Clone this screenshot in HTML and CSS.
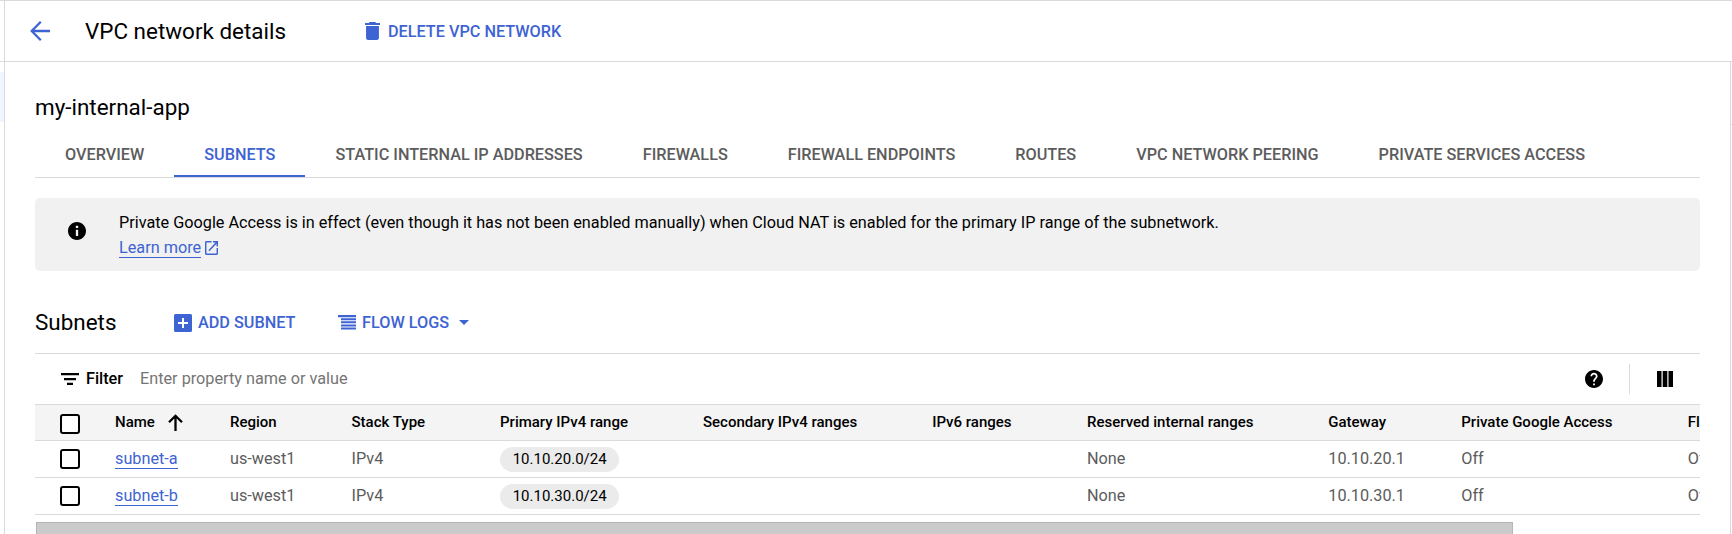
FILE: index.html
```html
<!DOCTYPE html>
<html lang="en">
<head>
<meta charset="utf-8">
<title>VPC network details</title>
<link rel="stylesheet" href="styles.css">
</head>
<body>
<div class="app">
  <div class="rail"><span class="rail-active"></span></div>
  <div class="panel">
    <header class="topbar">
      <svg class="back" viewBox="0 0 20 22" width="20" height="22"><path d="M20 11H2M10.800 1.800L1.700 11L10.800 20.200" fill="none" stroke="currentColor" stroke-width="2.300"/></svg>
      <h1 class="title">VPC network details</h1>
      <button class="action delete">
        <svg viewBox="5 3 14 18" width="15" height="18" preserveAspectRatio="none"><path fill="currentColor" d="M6 19c0 1.100.9 2 2 2h8c1.100 0 2-.9 2-2V7H6v12zM19 4h-3.500l-1-1h-5l-1 1H5v2h14V4z"/></svg>
        <span>DELETE VPC NETWORK</span>
      </button>
    </header>
    <div class="body">
      <main class="content">
        <h2 class="name">my-internal-app</h2>
        <nav class="tabs">
          <a class="tab">OVERVIEW</a>
          <a class="tab active">SUBNETS</a>
          <a class="tab">STATIC INTERNAL IP ADDRESSES</a>
          <a class="tab">FIREWALLS</a>
          <a class="tab">FIREWALL ENDPOINTS</a>
          <a class="tab">ROUTES</a>
          <a class="tab">VPC NETWORK PEERING</a>
          <a class="tab">PRIVATE SERVICES ACCESS</a>
        </nav>
        <section class="notice">
          <svg class="info" viewBox="2 2 20 20" width="18" height="18"><path fill="currentColor" d="M12 2C6.480 2 2 6.480 2 12s4.480 10 10 10 10-4.480 10-10S17.520 2 12 2zm1.300 15.500h-2.600V10.700h2.600v6.800zm0-8.700h-2.600V6.300h2.600v2.500z"/></svg>
          <div class="notice-text">
            <p>Private Google Access is in effect (even though it has not been enabled manually) when Cloud NAT is enabled for the primary IP range of the subnetwork.</p>
            <p class="learn"><a class="link">Learn more</a><svg viewBox="3 3 18 18" width="13" height="14" preserveAspectRatio="none"><path fill="currentColor" d="M19 19H5V5h7V3H5c-1.110 0-2 .9-2 2v14c0 1.100.89 2 2 2h14c1.100 0 2-.9 2-2v-7h-2v7zM14 3v2h3.590l-9.830 9.830 1.410 1.410L19 6.410V10h2V3h-7z"/></svg></p>
          </div>
        </section>
        <div class="subnets-bar">
          <h2 class="subnets-title">Subnets</h2>
          <button class="action add">
            <svg viewBox="0 0 18 18" width="18" height="18"><path fill="currentColor" fill-rule="evenodd" d="M1.500 0h15A1.500 1.500 0 0 1 18 1.500v15a1.500 1.500 0 0 1-1.500 1.500h-15A1.500 1.500 0 0 1 0 16.500v-15A1.500 1.500 0 0 1 1.500 0zM8 4v4H4v2h4v4h2v-4h4V8h-4V4z"/></svg>
            <span>ADD SUBNET</span>
          </button>
          <button class="action flow">
            <svg viewBox="0 0 18 15" width="18" height="15"><path fill="currentColor" d="M0 0h18v2.200H0zM3 3.200h15v2H3zM3 6.300h15v2H3zM3 9.400h15v2H3zM3 12.500h15v2H3z"/></svg>
            <span>FLOW LOGS</span>
            <svg class="caret" viewBox="0 0 10 5" width="10" height="5"><path fill="currentColor" d="M0 0h10L5 5z"/></svg>
          </button>
        </div>
        <div class="filter-bar">
          <svg class="filter-icon" viewBox="0 0 18 12" width="18" height="12"><path fill="currentColor" d="M0 0h18v2.300H0zM3 5h12v2.200H3zM6 9.800h6V12H6z"/></svg>
          <span class="filter-label">Filter</span>
          <span class="placeholder">Enter property name or value</span>
          <svg class="help" viewBox="2 2 20 20" width="18" height="18"><path fill="currentColor" d="M12 2C6.480 2 2 6.480 2 12s4.480 10 10 10 10-4.480 10-10S17.520 2 12 2zm1 17h-2v-2h2v2zm2.070-7.750l-.9.920C13.450 12.900 13 13.500 13 15h-2v-.5c0-1.100.45-2.100 1.170-2.830l1.240-1.260c.370-.360.590-.860.590-1.410 0-1.100-.9-2-2-2s-2 .9-2 2H8c0-2.210 1.790-4 4-4s4 1.790 4 4c0 .880-.360 1.680-.930 2.250z"/></svg>
          <span class="divider"></span>
          <svg class="columns" viewBox="0 0 16 16" width="16" height="16"><path fill="currentColor" d="M0 0h4.500v16H0zM5.700 0h4.600v16H5.700zM11.500 0H16v16h-4.500z"/></svg>
        </div>
        <div class="table">
          <div class="row head">
            <span class="check"></span>
            <span class="sorted">Name <svg viewBox="0 0 15 17" width="15" height="17"><path d="M7.500 17V1.800M1 8.300L7.500 1.800L14 8.300" fill="none" stroke="currentColor" stroke-width="2.300"/></svg></span>
            <span>Region</span><span>Stack Type</span><span>Primary IPv4 range</span><span>Secondary IPv4 ranges</span><span>IPv6 ranges</span><span>Reserved internal ranges</span><span>Gateway</span><span>Private Google Access</span><span>Flow logs</span>
          </div>
          <div class="row">
            <span class="check"></span>
            <span><a class="link">subnet-a</a></span><span>us-west1</span><span>IPv4</span><span><b class="chip">10.10.20.0/24</b></span><span></span><span></span><span>None</span><span>10.10.20.1</span><span>Off</span><span>Off</span>
          </div>
          <div class="row">
            <span class="check"></span>
            <span><a class="link">subnet-b</a></span><span>us-west1</span><span>IPv4</span><span><b class="chip">10.10.30.0/24</b></span><span></span><span></span><span>None</span><span>10.10.30.1</span><span>Off</span><span>Off</span>
          </div>
        </div>
        <div class="scrollbar"></div>
      </main>
      <aside class="side"></aside>
    </div>
  </div>
</div>
</body>
</html>
```
FILE: styles.css
```css
* { box-sizing: border-box; }
body { margin: 0; background: #fff; color: #000; font: 16.245px/20px Roboto, sans-serif; overflow: hidden; }
h1, h2, p { margin: 0; font-weight: 400; }
button { border: 0; padding: 0; background: none; font: inherit; }
svg { display: block; flex: none; }

.app { display: flex; height: 534px; overflow: hidden; border-top: 1px solid #dadada; }
.rail { width: 5px; flex: none; border-right: 1px solid #dadada; padding-top: 71px; }
.rail-active { display: block; width: 4px; height: 50px; background: #f0f5ff; }
.panel { flex: 1; min-width: 0; display: flex; flex-direction: column; }

.topbar { flex: none; display: flex; align-items: center; height: 61px; border-bottom: 1px solid #dadada; margin-left: -5px; padding-left: 30px; }
.back { color: #3e63d2; }
.title { margin-left: 35px; width: 280px; font-size: 22.450px; line-height: 28px; }
.action { display: flex; align-items: center; color: #3e63d2; font-weight: 500; }
.delete { gap: 8px; }
.delete span { padding-top: 2px; }

.body { flex: 1; min-height: 0; display: flex; }
.content { flex: 1; min-width: 0; padding: 31px 30px 0 30px; }
.side { width: 2px; border-left: 1px solid #dadada; flex: none; }
.side::before { content: ""; display: block; height: 62px; border-bottom: 1px solid #dadada; }

.name { font-size: 22.450px; line-height: 28px; padding-bottom: 1px; }
.tabs { display: flex; height: 56px; border-bottom: 1px solid #dadada; }
.tab { padding: 23px 30px 0; height: 55px; white-space: nowrap; font-weight: 500; color: #5c5c5c; }
.tab.active { color: #3e63d2; border-bottom: 2px solid #3e63d2; }

.notice { display: flex; margin-top: 20px; height: 73px; border-radius: 5px; background: #f1f1f1; padding: 12px 0 0 33px; }
.info { margin-top: 12px; }
.notice-text { margin-left: 33px; line-height: 25px; white-space: nowrap; }
.learn { display: flex; align-items: center; gap: 4px; padding-top: 3px; color: #3e63d2; }
.link { color: #3e63d2; line-height: 19px; border-bottom: 1px solid #3e63d2; }

.subnets-bar { display: flex; align-items: center; height: 83px; border-bottom: 1px solid #dadada; padding-top: 21px; }
.subnets-title { font-size: 22.450px; line-height: 28px; width: 139px; padding-bottom: 2px; }
.add { gap: 6px; width: 164px; }
.flow { gap: 6px; }
.caret { margin-left: 4px; }

.filter-bar { display: flex; align-items: center; height: 50px; padding-left: 26px; }
.filter-label { margin-left: 7px; width: 54px; font-weight: 500; }
.placeholder { color: #757575; flex: 1; }
.divider { width: 1px; height: 30px; background: #dadada; margin: 0 27px 0 26px; }
.columns { margin-right: 27px; }

.table { overflow: hidden; }
.row { display: grid; grid-template-columns: 80px 115px 121.500px 148.500px 203px 229.200px 154.800px 241.300px 133px 226.500px 120px; width: 1780px; height: 37px; align-items: center; border-bottom: 1px solid #dadada; color: #5c5c5c; }
.head { padding-bottom: 2px; border-top: 1px solid #dadada; background: #f4f4f4; color: #000; font-size: 15px; font-weight: 500; }
.sorted { display: flex; gap: 13px; }
.sorted svg { margin: 2px 0 0; }
.check { width: 20px; height: 20px; margin: 0 0 1px 25px; border: 2px solid #000; border-radius: 3px; background: #fff; }
.head .check { margin: 4px 0 0 25px; }
.chip { display: inline-block; height: 25px; line-height: 24px; padding: 0 12.700px; border-radius: 13px; background: #ebebeb; color: #000; font-size: 15px; font-weight: 400; }
.scrollbar { margin: 7px 0 0 1px; width: 1477px; height: 14px; background: #cbcbcb; border: 1px solid #b5b5b5; border-bottom: 0; }
```
